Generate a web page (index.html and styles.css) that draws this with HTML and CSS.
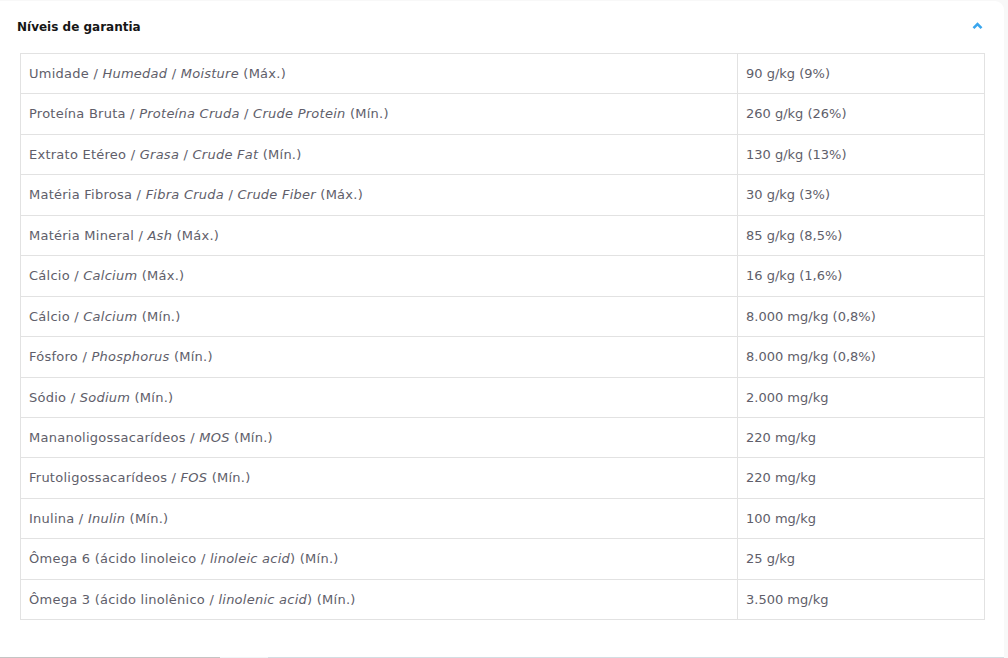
FILE: index.html
```html
<!DOCTYPE html>
<html lang="pt">
<head>
<meta charset="utf-8">
<title>Níveis de garantia</title>
<link rel="stylesheet" href="styles.css">
</head>
<body>
<div class="card">
  <div class="header">
    <h2 class="title">Níveis de garantia</h2>
    <svg class="chevron" width="11" height="8" viewBox="0 0 11 8"><polyline points="1.5,6.2 5.5,2.2 9.5,6.2" fill="none" stroke="#3aa6ee" stroke-width="2.6"/></svg>
  </div>
  <table class="levels">
    <tbody>
      <tr><td class="name">Umidade / <i>Humedad</i> / <i>Moisture</i> (Máx.)</td><td class="val">90 g/kg (9%)</td></tr>
      <tr><td class="name">Proteína Bruta / <i>Proteína Cruda</i> / <i>Crude Protein</i> (Mín.)</td><td class="val">260 g/kg (26%)</td></tr>
      <tr><td class="name">Extrato Etéreo / <i>Grasa</i> / <i>Crude Fat</i> (Mín.)</td><td class="val">130 g/kg (13%)</td></tr>
      <tr><td class="name">Matéria Fibrosa / <i>Fibra Cruda</i> / <i>Crude Fiber</i> (Máx.)</td><td class="val">30 g/kg (3%)</td></tr>
      <tr><td class="name">Matéria Mineral / <i>Ash</i> (Máx.)</td><td class="val">85 g/kg (8,5%)</td></tr>
      <tr><td class="name">Cálcio / <i>Calcium</i> (Máx.)</td><td class="val">16 g/kg (1,6%)</td></tr>
      <tr><td class="name">Cálcio / <i>Calcium</i> (Mín.)</td><td class="val">8.000 mg/kg (0,8%)</td></tr>
      <tr><td class="name">Fósforo / <i>Phosphorus</i> (Mín.)</td><td class="val">8.000 mg/kg (0,8%)</td></tr>
      <tr><td class="name">Sódio / <i>Sodium</i> (Mín.)</td><td class="val">2.000 mg/kg</td></tr>
      <tr><td class="name">Mananoligossacarídeos / <i>MOS</i> (Mín.)</td><td class="val">220 mg/kg</td></tr>
      <tr><td class="name">Frutoligossacarídeos / <i>FOS</i> (Mín.)</td><td class="val">220 mg/kg</td></tr>
      <tr><td class="name">Inulina / <i>Inulin</i> (Mín.)</td><td class="val">100 mg/kg</td></tr>
      <tr><td class="name">Ômega 6 (ácido linoleico / <i>linoleic acid</i>) (Mín.)</td><td class="val">25 g/kg</td></tr>
      <tr><td class="name">Ômega 3 (ácido linolênico / <i>linolenic acid</i>) (Mín.)</td><td class="val">3.500 mg/kg</td></tr>
    </tbody>
  </table>
  <div class="bottom-line"><span class="seg-a"></span><span class="seg-b"></span><span class="seg-c"></span></div>
</div>
</body>
</html>
```

FILE: styles.css
```css
html, body {
  margin: 0;
  padding: 0;
  background: #f8f8f8;
  height: 658px;
  overflow: hidden;
}
body {
  font-family: "DejaVu Sans", "Liberation Sans", sans-serif;
}
.card {
  width: 1004px;
  height: 657px;
  margin-top: 1px;
  background: #ffffff;
  border-top-right-radius: 9px;
  display: flex;
  flex-direction: column;
}
.header {
  height: 51px;
  padding: 0 21px 1px 17px;
  display: flex;
  align-items: center;
  justify-content: space-between;
}
.title {
  margin: 0;
  font-size: 12px;
  font-weight: 700;
  color: #161616;
}
.chevron {
  display: block;
  margin-top: -1px;
}
.levels {
  margin: 0 0 0 20px;
  width: 965px;
  border-collapse: collapse;
  table-layout: fixed;
}
.levels td {
  border: 1px solid #e2e2e2;
  padding: 12px 8px;
  height: 15.43px;
  line-height: 15.43px;
  font-size: 13px;
  color: #605e6a;
  white-space: nowrap;
}
.levels td.name {
  width: 700px;
  letter-spacing: 0.25px;
}
.levels td i {
  font-style: italic;
}
.bottom-line {
  margin-top: auto;
  height: 1px;
  display: flex;
}
.seg-a { width: 220px; background: #c4c4c4; }
.seg-b { width: 48px; background: #eef3f5; }
.seg-c { flex: 1; background: #d3dde2; }
```
